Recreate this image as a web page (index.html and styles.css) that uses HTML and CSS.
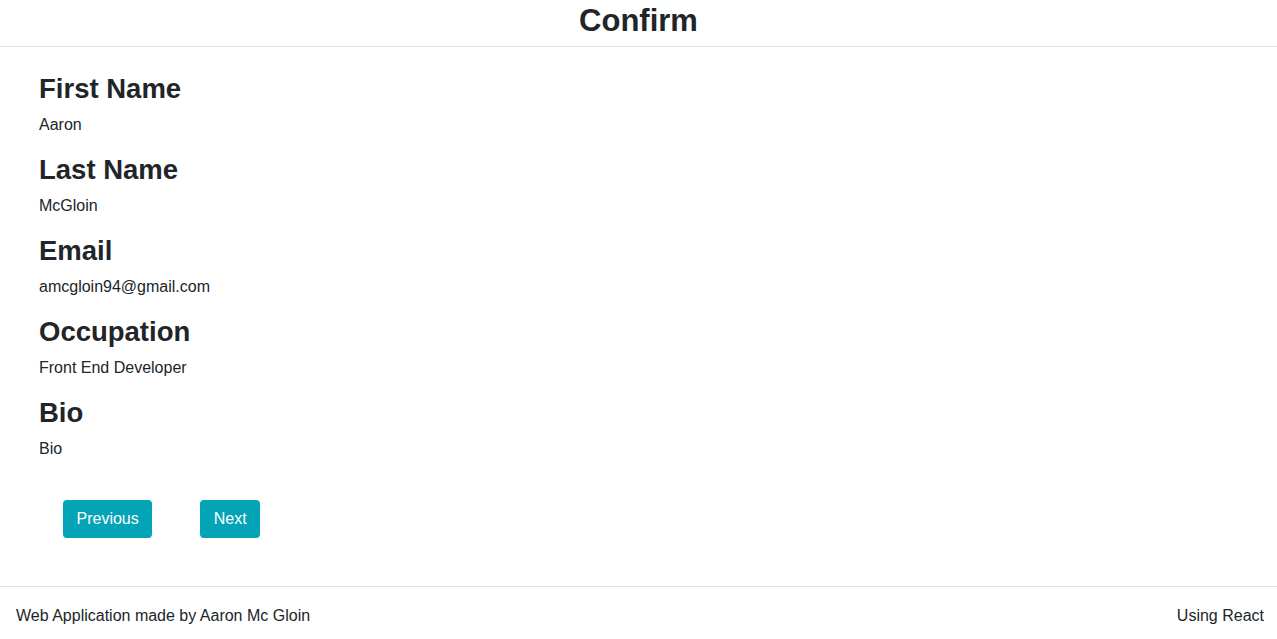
FILE: index.html
```html
<!DOCTYPE html>
<html lang="en">
<head>
<meta charset="utf-8">
<title>Confirm</title>
<link rel="stylesheet" href="styles.css">
</head>
<body>
<header class="topbar">
  <h1 class="title">Confirm</h1>
</header>
<main class="content">
  <section class="field">
    <h3 class="label">First Name</h3>
    <p class="value">Aaron</p>
  </section>
  <section class="field">
    <h3 class="label">Last Name</h3>
    <p class="value">McGloin</p>
  </section>
  <section class="field">
    <h3 class="label">Email</h3>
    <p class="value">amcgloin94@gmail.com</p>
  </section>
  <section class="field">
    <h3 class="label">Occupation</h3>
    <p class="value">Front End Developer</p>
  </section>
  <section class="field">
    <h3 class="label">Bio</h3>
    <p class="value">Bio</p>
  </section>
  <div class="actions">
    <button class="btn" type="button">Previous</button>
    <button class="btn" type="button">Next</button>
  </div>
</main>
<footer class="footer">
  <span>Web Application made by Aaron Mc Gloin</span>
  <span>Using React</span>
</footer>
</body>
</html>
```
FILE: styles.css
```css
* { box-sizing: border-box; }
html, body {
  margin: 0;
  padding: 0;
}
body {
  font-family: "Liberation Sans", Arial, Helvetica, sans-serif;
  font-size: 16px;
  line-height: 1.5;
  color: #212529;
  background: #fff;
}
.topbar {
  border-bottom: 1px solid #dee2e6;
  padding: 2px 0 7px;
  text-align: center;
}
.title {
  margin: 0;
  font-size: 31px;
  font-weight: bold;
  line-height: 37px;
}
.content {
  padding: 25px 39px 0;
}
.label {
  margin: 0 0 8px;
  font-size: 27.5px;
  font-weight: bold;
  line-height: 33px;
}
.value {
  margin: 0 0 16px;
  line-height: 24px;
}
.actions {
  display: flex;
  padding-top: 23px;
  padding-bottom: 48px;
}
.btn {
  margin: 0 24px;
  height: 38px;
  padding: 0 13.5px;
  border: 0;
  border-radius: 4px;
  background: #02a4b6;
  color: #fff;
  font-family: inherit;
  font-size: 16px;
  line-height: 24px;
}
.footer {
  display: flex;
  justify-content: space-between;
  border-top: 1px solid #dee2e6;
  padding: 17px 13px 14px 16px;
  line-height: 24px;
}
```
